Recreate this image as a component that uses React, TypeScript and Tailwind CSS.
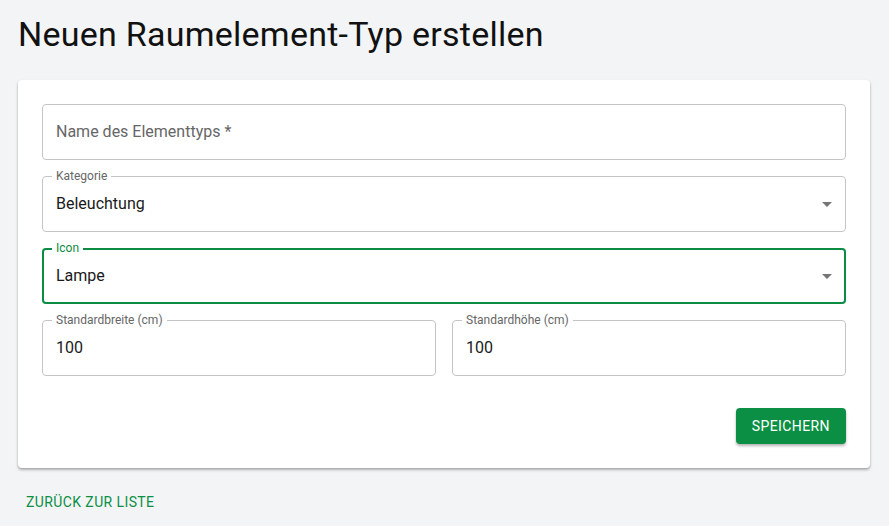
import React from 'react';

function Outlined({ label, value, placeholder, focused, select }: { label?: string; value?: string; placeholder?: string; focused?: boolean; select?: boolean }) {
  return (
    <div className="relative h-14 w-full">
      <div className={`absolute inset-0 rounded ${focused ? 'border-2 border-[#0b8c42]' : 'border border-[#c4c4c4]'}`} />
      {label && (
        <span className={`absolute -top-[8px] left-[10px] bg-white px-1 text-xs leading-4 ${focused ? 'text-[#0b8c42]' : 'text-[#666666]'}`}>
          {label}
        </span>
      )}
      <div className="relative flex h-full items-center px-[14px] text-base">
        {value ? <span className="text-[#1a1a1a]">{value}</span> : <span className="text-[#666666]">{placeholder}</span>}
      </div>
      {select && (
        <svg className="absolute right-[7px] top-[16px]" width="24" height="24" viewBox="0 0 24 24">
          <path d="M7 10l5 5 5-5z" fill="#757575" />
        </svg>
      )}
    </div>
  );
}

export default function App() {
  return (
    <div className="min-h-[526px] bg-[#f3f4f6] pl-[18px] pr-[19px] pt-[13px] font-['Roboto',sans-serif]">
      <h1 className="mb-[25px] text-[34px] leading-[42px] tracking-[0.25px] text-[#111111]">Neuen Raumelement-Typ erstellen</h1>
      <div className="rounded bg-white p-6 shadow-[0_2px_3px_rgba(0,0,0,0.25),0_1px_2px_rgba(0,0,0,0.12)]">
        <div className="flex flex-col gap-4">
          <Outlined placeholder="Name des Elementtyps *" />
          <Outlined label="Kategorie" value="Beleuchtung" select />
          <Outlined label="Icon" value="Lampe" select focused />
          <div className="grid grid-cols-2 gap-4">
            <Outlined label="Standardbreite (cm)" value="100" />
            <Outlined label="Standardhöhe (cm)" value="100" />
          </div>
        </div>
        <div className="mt-8 flex justify-end">
          <button className="h-9 rounded bg-[#0b8f44] px-4 text-sm font-normal tracking-[0.4px] text-white shadow-[0_2px_3px_rgba(0,0,0,0.3)]">
            SPEICHERN
          </button>
        </div>
      </div>
      <button className="mt-4 h-9 rounded px-2 text-sm font-normal tracking-[0.4px] text-[#0b8f44]">ZURÜCK ZUR LISTE</button>
    </div>
  );
}
